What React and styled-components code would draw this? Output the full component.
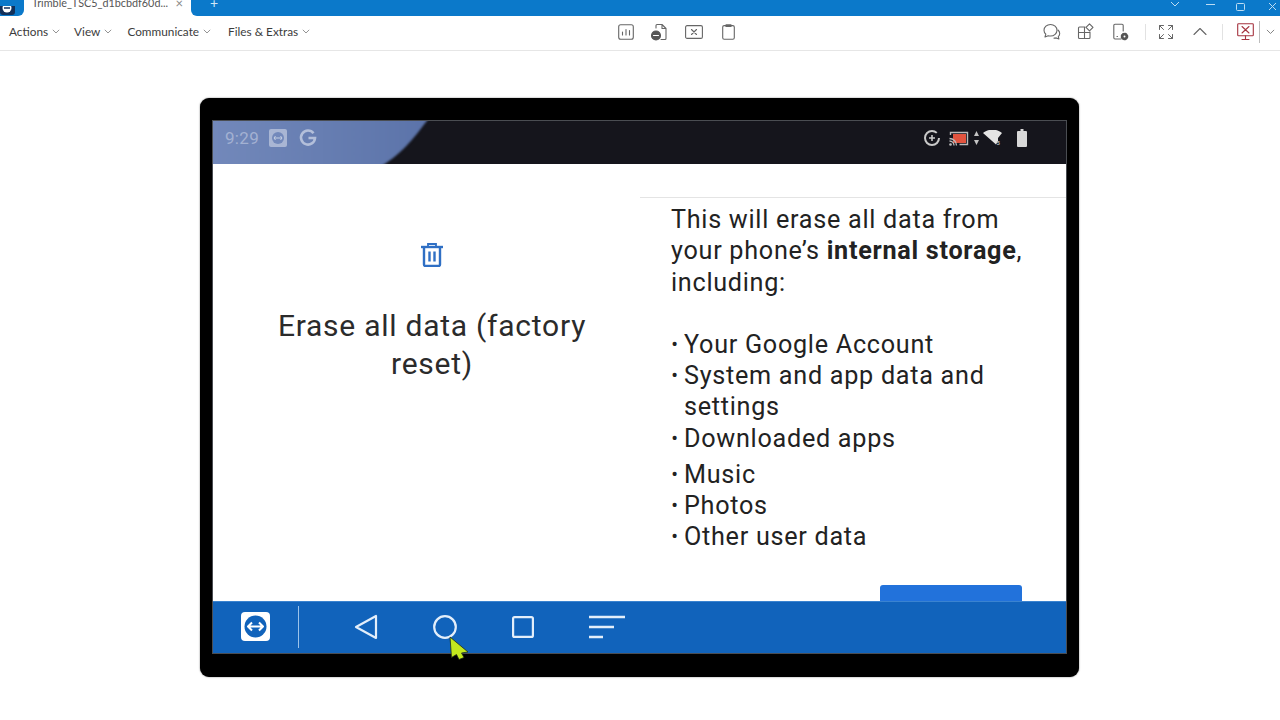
import React from 'react';
import styled, { createGlobalStyle } from 'styled-components';

const Global = createGlobalStyle`
  html, body { margin: 0; padding: 0; background: #fff; }
  #root { width: 1280px; height: 720px; overflow: hidden; }
  * { box-sizing: border-box; }
`;

const Page = styled.div`
  width: 1280px; height: 720px; display: flex; flex-direction: column; background: #fff;
  font-family: Lato, "Noto Sans", sans-serif;
`;
const TitleBar = styled.div`
  height: 16px; background: #fff; display: flex; overflow: hidden; flex: none;
`;
const LogoTab = styled.div`
  width: 24px; height: 16px; background: #0b79ca; border-bottom-right-radius: 6px; overflow: hidden; flex: none;
`;
const ActiveTab = styled.div`
  width: 167px; height: 16px; background: #fff; display: flex; align-items: flex-end;
  padding: 0 8px 5px 8px; justify-content: space-between; overflow: hidden;
  font-size: 10.8px; line-height: 16px; color: #555; flex: none;
`;
const TabLabel = styled.span` white-space: nowrap; `;
const TabClose = styled.span` font-size: 13px; color: #888; `;
const TabStrip = styled.div`
  flex: 1; display: flex; background: #0b79ca; border-bottom-left-radius: 6px;
`;
const NewTab = styled.div`
  width: 46px; display: flex; justify-content: center; align-items: flex-end; padding-bottom: 5px;
  color: #cfe6f7; font-size: 14px; line-height: 16px; flex: none;
`;
const WindowButtons = styled.div`
  margin-left: auto; display: flex; align-items: flex-end; height: 16px; padding-bottom: 9px;
`;
const WinSlot = styled.div`
  width: 16px; margin-left: ${p => p.$ml || 0}px; display: flex; justify-content: center; color: #bcdcf3;
`;

const Toolbar = styled.div`
  height: 35px; flex: none; border-bottom: 1px solid #e6e6e6; display: grid;
  grid-template-columns: 608px 1fr auto; align-items: center; padding: 0 0 3px 9px;
`;
const Menus = styled.div` display: flex; align-items: center; `;
const Menu = styled.div`
  display: flex; align-items: center; gap: 4px; font-size: 11.8px; color: #3c3c3c;
  margin-right: ${p => p.$mr}px;
`;
const IconRow = styled.div` display: flex; align-items: center; `;
const IconSlot = styled.div`
  width: ${p => p.$w}px; height: 24px; display: flex; justify-content: center; align-items: center; flex: none;
`;
const Sep = styled.div`
  width: 1px; flex: none; height: ${p => p.$dark ? 22 : 16}px; background: ${p => p.$dark ? '#bdbdbd' : '#e2e2e2'};
  margin: 0 ${p => p.$mr || 0}px 0 ${p => p.$ml || 0}px;
`;

const Stage = styled.div`
  flex: 1; padding: 47px 0 0 200px;
`;
const Device = styled.div`
  width: 879px; height: 579px; background: #000; border-radius: 9px;
  box-shadow: 0 0 1.5px rgba(60,60,60,.9);
  padding: 23px 13px 24px;
`;
const Screen = styled.div`
  height: 532px; display: flex; flex-direction: column; box-shadow: 0 0 0 1px #4a4d52;
  background: #fff;
`;
const StatusBar = styled.div`
  position: relative; height: 43px; background: #15151c; display: flex; align-items: center;
  justify-content: space-between; padding: 0 39px 9px 12px; flex: none; overflow: hidden;
`;
const Wallpaper = styled.svg`
  position: absolute; left: 0; top: 0; overflow: visible; filter: blur(1px);
`;
const StatusGroup = styled.div`
  position: relative; display: flex; align-items: center; gap: ${p => p.$gap}px;
`;
const Clock = styled.span`
  font-family: Roboto, sans-serif; font-size: 17px; color: #a3b1d2; letter-spacing: .3px;
`;
const Content = styled.div`
  height: 437px; display: grid; grid-template-columns: 427px 1fr; overflow: hidden; flex: none;
`;
const LeftPane = styled.div`
  display: flex; flex-direction: column; align-items: center; padding: 79px 0 0 11px;
`;
const PaneTitle = styled.h1`
  margin: 40px 0 0; width: 340px; text-align: center; font: 400 30px/38px Roboto, sans-serif;
  letter-spacing: .75px; color: #2b2b2b;
`;
const RightPane = styled.div`
  margin-top: 33px; border-top: 1px solid #e4e4e4; padding: 6px 30px 0 31px;
  display: flex; flex-direction: column; font: 400 25.2px/31.3px Roboto, sans-serif; letter-spacing: .72px; color: #222;
`;
const Para = styled.p` margin: 0; width: 355px; `;
const Bold = styled.b` font-weight: 700; `;
const List = styled.ul`
  list-style: none; margin: ${p => p.$mt}px 0 0; padding: 0; line-height: ${p => p.$lh}px;
`;
const Item = styled.li`
  display: flex; gap: 6px; width: 330px;
  &::before { content: "•"; width: 7px; font-size: 20px; flex: none; text-align: center; letter-spacing: 0; }
`;
const BlueButton = styled.div`
  align-self: flex-end; margin: 33px 14px 0 0; width: 142px; height: 40px; flex: none;
  background: #2272db; border-radius: 3px;
`;
const NavBar = styled.div`
  position: relative; height: 52px; flex: none; background: #1163bb; display: flex; align-items: center;
  padding: 0 0 2px 28px; border-top: 1px solid #3a83d0;
`;
const NavSlot = styled.div`
  width: ${p => p.$w}px; display: flex; justify-content: center; align-items: center; flex: none;
`;
const NavDivider = styled.div`
  width: 1px; height: 42px; background: #9cc3ea; margin-left: 28px; flex: none;
`;
const Cursor = styled.svg`
  position: absolute; left: 235px; top: 33px;
`;

const Chevron = ({ c = '#777', s = 8 }) => (
  <svg width={s} height={s * .6} viewBox="0 0 10 6" fill="none" stroke={c} strokeWidth="1"><path d="M1 1l4 4 4-4" /></svg>
);
const S = ({ children, w = 18, h = 18, vb = '0 0 18 18', c = '#666', sw = 1.1 }) => (
  <svg width={w} height={h} viewBox={vb} fill="none" stroke={c} strokeWidth={sw} strokeLinejoin="round" strokeLinecap="round">{children}</svg>
);
const Gear = ({ x, y }) => (
  <g>
    <circle cx={x} cy={y} r="3" fill="#555" stroke="#555" strokeWidth="1.6" strokeDasharray="1.4 1" />
    <circle cx={x} cy={y} r="1" fill="#fff" stroke="none" />
  </g>
);

export default function App() {
  return (
    <Page>
      <Global />
      <TitleBar>
        <LogoTab>
          <svg width="15" height="10" viewBox="0 0 15 10">
            <rect x="0" y="-5" width="15" height="14" rx="3" fill="#12305a" />
            <circle cx="7" cy="2" r="4.500" fill="#fff" />
            <path d="M4 2h6" stroke="#12305a" strokeWidth="1.400" />
          </svg>
        </LogoTab>
        <ActiveTab><TabLabel>Trimble_TSC5_d1bcbdf60d...</TabLabel><TabClose>×</TabClose></ActiveTab>
        <TabStrip>
          <NewTab>+</NewTab>
          <WindowButtons>
            <WinSlot><Chevron c="#bcdcf3" s={10} /></WinSlot>
            <WinSlot $ml={19}><svg width="9" height="6" viewBox="0 0 9 6"><path d="M0 3.500h9" stroke="#bcdcf3" /></svg></WinSlot>
            <WinSlot $ml={14}><svg width="9" height="8" viewBox="0 0 9 8" fill="none" style={{ marginBottom: -4 }}><rect x=".5" y=".5" width="8" height="7" rx="1" stroke="#bcdcf3" /></svg></WinSlot>
            <WinSlot $ml={16}><svg width="9" height="7" viewBox="0 0 9 7" style={{ marginBottom: -3 }}><path d="M1 0l7 7M8 0L1 7" stroke="#bcdcf3" /></svg></WinSlot>
          </WindowButtons>
        </TabStrip>
      </TitleBar>

      <Toolbar>
        <Menus>
          <Menu $mr={14}>Actions <Chevron /></Menu>
          <Menu $mr={15}>View <Chevron /></Menu>
          <Menu $mr={17}>Communicate <Chevron /></Menu>
          <Menu $mr={0}>Files &amp; Extras <Chevron /></Menu>
        </Menus>
        <IconRow>
          <IconSlot $w={18}><S w={16} h={16} vb="0 0 16 16"><rect x=".7" y=".7" width="14.600" height="14.600" rx="2" /><path d="M4.500 11V8M8 11V5.500M11.500 11V6.500" /></S></IconSlot>
          <IconSlot $w={47}>
            <S w={18} h={18}><path d="M6 5V2.500a1 1 0 0 1 1-1h5l4 4v10a1 1 0 0 1-1 1h-4M12 1.500v4h4" /><circle cx="6" cy="12.500" r="4.500" fill="#555" stroke="#555" /><path d="M3.500 12.500h5" stroke="#fff" /></S>
          </IconSlot>
          <IconSlot $w={23}><S w={18} h={14} vb="0 0 18 14"><rect x=".6" y=".6" width="16.800" height="12.800" rx="1.500" /><path d="M6.500 4.500l5 5M11.500 4.500l-5 5" /></S></IconSlot>
          <IconSlot $w={47}><S w={13} h={16} vb="0 0 13 16"><rect x=".7" y="1.600" width="11.600" height="13.700" rx="1.500" /><path d="M4 .8h5v1.600H4z" /></S></IconSlot>
        </IconRow>
        <IconRow>
          <IconSlot $w={34}><S w={19} h={18}><path d="M8 1.500c3.600 0 6.500 2.500 6.500 5.700S11.600 13 8 13c-.8 0-1.600-.1-2.300-.3L2.500 14l.8-2.800C2 10 1.500 8.700 1.500 7.200 1.500 4 4.400 1.500 8 1.500z" /><path d="M15.500 7c1 .9 1.700 2.100 1.700 3.500 0 1.200-.5 2.300-1.400 3.100l.6 2.400-2.700-1.100c-.7.2-1.400.3-2.200.2" /></S></IconSlot>
          <IconSlot $w={34}><S w={17} h={17} vb="0 0 17 17"><path d="M8 4H2.500a1 1 0 0 0-1 1v9.500a1 1 0 0 0 1 1H12a1 1 0 0 0 1-1V9M1.500 9.500H13M7.500 4v11.500" /><path d="M12.500.8l3.500 3.500-3.500 3.500L9 4.300z" /></S></IconSlot>
          <IconSlot $w={36}><S w={18} h={18}><path d="M10 16H4a1.200 1.200 0 0 1-1.200-1.200V2.500A1.200 1.200 0 0 1 4 1.300h7a1.200 1.200 0 0 1 1.200 1.200V8" /><path d="M6 13.500h.5" /><Gear x={13.500} y={13.500} /></S></IconSlot>
          <Sep $ml={7} />
          <IconSlot $w={40}><S w={16} h={16} vb="0 0 16 16" sw={1}><path d="M1.500 5.500v-4h4M1.500 1.500l4 4M14.500 5.500v-4h-4M14.500 1.500l-4 4M1.500 10.500v4h4M1.500 14.500l4-4M14.500 10.500v4h-4M14.500 14.500l-4-4" /></S></IconSlot>
          <IconSlot $w={28}><S w={14} h={9} vb="0 0 14 9"><path d="M1 7.500l6-6 6 6" /></S></IconSlot>
          <Sep $ml={8} $mr={8} />
          <IconSlot $w={28}><S w={17} h={18} vb="0 0 17 18" c="#a5333f"><rect x=".7" y=".7" width="15.600" height="12" rx=".8" /><path d="M5 3.500l7 6.500M12 3.500L5 10M8.500 12.700V16M5 16.500h7" /></S></IconSlot>
          <Sep $dark />
          <IconSlot $w={20}><Chevron s={9} /></IconSlot>
        </IconRow>
      </Toolbar>

      <Stage>
        <Device>
          <Screen>
            <StatusBar>
              <Wallpaper width="230" height="43" viewBox="0 0 230 43">
                <defs>
                  <linearGradient id="wp" x1="0" x2="1" y1="0" y2="0">
                    <stop offset="0" stopColor="#7389bb" /><stop offset="1" stopColor="#5b73a9" />
                  </linearGradient>
                </defs>
                <path d="M-8 -8H220C204 12 192 33 160 50H-8Z" fill="url(#wp)" />
              </Wallpaper>
              <StatusGroup $gap={10}>
                <Clock>9:29</Clock>
                <svg width="18" height="18" viewBox="0 0 18 18">
                  <rect x="0" y="0" width="18" height="18" rx="2" fill="#a9b6d4" />
                  <circle cx="9" cy="9" r="6" fill="#7389bb" />
                  <path d="M5 9h8M6.500 7L5 9l1.500 2M11.500 7L13 9l-1.500 2" stroke="#c5cfe3" fill="none" />
                </svg>
                <svg width="20" height="20" viewBox="0 0 20 20" fill="none" style={{ marginLeft: 1 }}>
                  <path d="M15.500 5.200A7 7 0 1 0 17 10h-6.500" stroke="#b3bfda" strokeWidth="2.600" />
                </svg>
              </StatusGroup>
              <StatusGroup $gap={8}>
                <svg width="18" height="18" viewBox="0 0 18 18" fill="none">
                  <circle cx="9" cy="9" r="7" stroke="#c9c9c9" strokeWidth="2" strokeDasharray="38 6" />
                  <path d="M9 6v6M6 9h6" stroke="#c9c9c9" strokeWidth="1.600" />
                </svg>
                <svg width="20" height="15" viewBox="0 0 20 15" fill="none" style={{ marginRight: -1 }}>
                  <path d="M1.500 4V1.500h17v12h-8" stroke="#bbb" strokeWidth="1.400" />
                  <rect x="4" y="3" width="13" height="9" fill="#e2543f" />
                  <path d="M.5 7.500a7 7 0 0 1 7 7M.5 10a4.500 4.500 0 0 1 4.500 4.500" stroke="#bbb" strokeWidth="1.300" />
                  <circle cx="1.500" cy="13.500" r="1.300" fill="#bbb" />
                </svg>
                <svg width="31" height="16" viewBox="-3 0 31 16" style={{ marginLeft: -3 }}>
                  <path d="M.5 1L3 6H-2zM.5 15L-2 10H3z" fill="#c4c4c4" />
                  <path d="M7 4c5-4.500 14-4.500 19 0l-4 5v3l-2 3.500z" fill="#e4e4e4" transform="translate(0 -1)" />
                  <text x="20.500" y="15" fontSize="6" fontFamily="Roboto" fontWeight="700" fill="#bbb">5</text>
                </svg>
                <svg width="10" height="18" viewBox="0 0 10 18" style={{ marginLeft: 5 }}>
                  <path d="M3.500 0h3v2H9a1 1 0 0 1 1 1v14a1 1 0 0 1-1 1H1a1 1 0 0 1-1-1V3a1 1 0 0 1 1-1h2.500z" fill="#d8d8d8" />
                </svg>
              </StatusGroup>
            </StatusBar>
            <Content>
              <LeftPane>
                <svg width="22" height="24" viewBox="0 0 22 24" fill="none" stroke="#2f6fc4">
                  <path d="M3 5v16.500a1.500 1.500 0 0 0 1.500 1.500h13a1.500 1.500 0 0 0 1.500-1.500V5" strokeWidth="2.400" />
                  <path d="M0 4h22" strokeWidth="2.400" />
                  <path d="M7 3V1h8v2" strokeWidth="1.800" />
                  <path d="M8.500 8.500v10M13.500 8.500v10" strokeWidth="2.400" />
                </svg>
                <PaneTitle>Erase all data (factory reset)</PaneTitle>
              </LeftPane>
              <RightPane>
                <Para>This will erase all data from your phone’s <Bold>internal storage</Bold>, including:</Para>
                <List $mt={31} $lh={31.3}>
                  <Item>Your Google Account</Item>
                  <Item>System and app data and settings</Item>
                  <Item>Downloaded apps</Item>
                </List>
                <List $mt={5} $lh={31}>
                  <Item>Music</Item>
                  <Item>Photos</Item>
                  <Item>Other user data</Item>
                </List>
                <BlueButton />
              </RightPane>
            </Content>
            <NavBar>
              <svg width="29" height="29" viewBox="0 0 29 29" style={{ flex: 'none' }}>
                <rect width="29" height="29" rx="4" fill="#fff" />
                <circle cx="14.500" cy="14.500" r="11" fill="#1163bb" />
                <path d="M7 14.500h15M11 10.500l-4 4 4 4M18 10.500l4 4-4 4" stroke="#fff" strokeWidth="2" fill="none" strokeLinejoin="round" />
              </svg>
              <NavDivider />
              <NavSlot $w={134}>
                <svg width="24" height="26" viewBox="0 0 24 26" fill="none" stroke="#e3eefa" strokeWidth="2.200" strokeLinejoin="round"><path d="M22 2v22L2 13z" /></svg>
              </NavSlot>
              <NavSlot $w={24}>
                <svg width="24" height="24" viewBox="0 0 24 24" fill="none" stroke="#e3eefa" strokeWidth="2.200"><circle cx="12" cy="12" r="10.800" /></svg>
              </NavSlot>
              <NavSlot $w={131}>
                <svg width="22" height="22" viewBox="0 0 22 22" fill="none" stroke="#e3eefa" strokeWidth="2.200"><rect x="1.100" y="1.100" width="19.800" height="19.800" rx="1.500" /></svg>
              </NavSlot>
              <svg width="38" height="24" viewBox="0 0 38 24" fill="none" stroke="#e3eefa" strokeWidth="2.400" style={{ flex: 'none' }}><path d="M1 2h36M1 12h25M1 22h14" /></svg>
              <Cursor width="22" height="26" viewBox="0 0 22 26">
                <path d="M2 2L20 17 13.500 18 16 22.500 11 24.500 8.500 19.500 3.500 22.500Z" fill="#c2e81e" stroke="#1f2d18" strokeWidth=".8" strokeLinejoin="round" />
              </Cursor>
            </NavBar>
          </Screen>
        </Device>
      </Stage>
    </Page>
  );
}
